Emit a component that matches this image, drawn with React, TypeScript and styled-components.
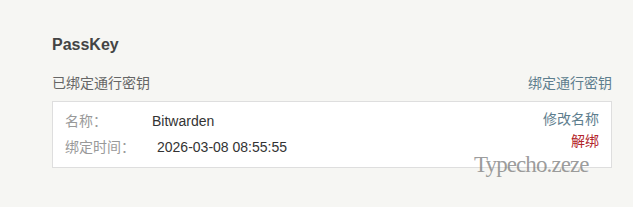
import React from 'react';
import styled, { createGlobalStyle } from 'styled-components';

const GlobalStyle = createGlobalStyle`
  html, body {
    margin: 0;
    padding: 0;
    background: #f6f6f3;
  }
  body {
    font-family: "Liberation Sans", Arial, "Noto Sans CJK SC", sans-serif;
    font-size: 14px;
    color: #444;
  }
`;

const passkeys = [
  { name: 'Bitwarden', bound: '2026-03-08 08:55:55' },
];

const App: React.FC = () => {
  return (
    <>
      <GlobalStyle />
      <Page>
        <Section>
          <Title>PassKey</Title>
          <Header>
            <Muted>已绑定通行密钥</Muted>
            <ActionLink href="#">绑定通行密钥</ActionLink>
          </Header>
          {passkeys.map((key) => (
            <KeyCard key={key.name}>
              <Fields>
                <Field>
                  <Label>名称：</Label>
                  <Value>{key.name}</Value>
                </Field>
                <Field>
                  <Label>绑定时间：</Label>
                  <Value $indent>{key.bound}</Value>
                </Field>
              </Fields>
              <Actions>
                <ActionLink href="#">修改名称</ActionLink>
                <ActionLink href="#" $danger>解绑</ActionLink>
              </Actions>
            </KeyCard>
          ))}
        </Section>
        <Watermark>Typecho.zeze</Watermark>
      </Page>
    </>
  );
};

// component style
const Page = styled.div`
  position: relative;
  width: 633px;
  height: 207px;
  box-sizing: border-box;
  padding: 35px 21px 0 52px;
  overflow: hidden;
`;

const Section = styled.div`
  display: flex;
  flex-direction: column;
`;

const Title = styled.h3`
  margin: 0;
  font-size: 16px;
  line-height: 20px;
  font-weight: bold;
  color: #444;
`;

const Header = styled.div`
  display: flex;
  justify-content: space-between;
  align-items: center;
  margin-top: 17px;
  line-height: 20px;
`;

const Muted = styled.span`
  color: #666;
`;

const ActionLink = styled.a<{ $danger?: boolean }>`
  color: ${(p) => (p.$danger ? '#b3262b' : '#5e7e8e')};
  text-decoration: none;
  line-height: 22px;
`;

const KeyCard = styled.div`
  display: flex;
  justify-content: space-between;
  align-items: flex-start;
  margin-top: 7px;
  padding: 6px 12px 7px 12px;
  background: #fff;
  border: 1px solid #dedede;
`;

const Fields = styled.div`
  display: flex;
  flex-direction: column;
`;

const Field = styled.div`
  display: flex;
  line-height: 26px;
`;

const Label = styled.span`
  width: 87px;
  color: #999;
`;

const Value = styled.span<{ $indent?: boolean }>`
  color: #333;
  padding-left: ${(p) => (p.$indent ? '5px' : '0')};
`;

const Actions = styled.div`
  display: flex;
  flex-direction: column;
  align-items: flex-end;
`;

const Watermark = styled.div`
  position: absolute;
  left: 474px;
  top: 152px;
  font-family: "Liberation Serif", "Times New Roman", serif;
  font-size: 23px;
  letter-spacing: -0.9px;
  color: rgba(130, 130, 130, 0.8);
  pointer-events: none;
`;

export default App;
